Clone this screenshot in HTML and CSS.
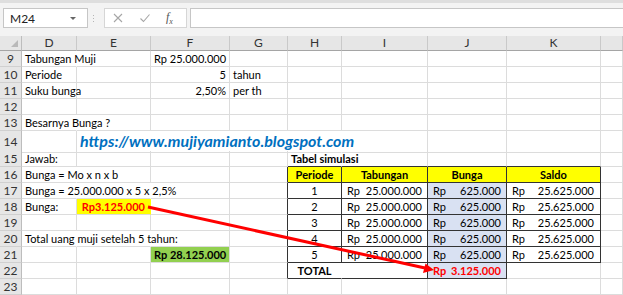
FILE: index.html
```html
<!DOCTYPE html>
<html>
<head>
<meta charset="utf-8">
<link rel="stylesheet" href="styles.css">
</head>
<body>
<div class="app">
  <div class="topbar">
    <div class="namebox"><span>M24</span><span class="caret"></span></div>
    <div class="sep"><i></i><i></i><i></i></div>
    <div class="iconbox">
      <svg class="ic" width="12" height="12" viewBox="0 0 12 12"><path d="M2 2 L10 10 M10 2 L2 10" stroke="#a6a6a6" stroke-width="1.1" fill="none"/></svg>
      <svg class="ic" width="12" height="12" viewBox="0 0 12 12"><path d="M1.5 6.5 L4.5 9.5 L10.5 2.5" stroke="#a6a6a6" stroke-width="1.1" fill="none"/></svg>
      <span class="fx">f<sub>x</sub></span>
    </div>
    <div class="finput"></div>
  </div>

  <div class="sheet">
    <div class="row hdr">
      <div class="corner"><span class="tri"></span></div>
      <div class="ch">D</div><div class="ch">E</div><div class="ch">F</div><div class="ch">G</div><div class="ch">H</div><div class="ch">I</div><div class="ch">J</div><div class="ch">K</div><div class="ch"></div>
    </div>

    <div class="row">
      <div class="rh">9</div>
      <div class="c ov">Tabungan Muji</div><div class="c"></div><div class="c r cur">Rp 25.000.000</div><div class="c"></div><div class="c"></div><div class="c"></div><div class="c"></div><div class="c"></div><div class="c"></div>
    </div>
    <div class="row">
      <div class="rh">10</div>
      <div class="c">Periode</div><div class="c"></div><div class="c r">5</div><div class="c">tahun</div><div class="c"></div><div class="c"></div><div class="c"></div><div class="c"></div><div class="c"></div>
    </div>
    <div class="row">
      <div class="rh">11</div>
      <div class="c">Suku bunga</div><div class="c"></div><div class="c r">2,50%</div><div class="c">per th</div><div class="c"></div><div class="c"></div><div class="c"></div><div class="c"></div><div class="c"></div>
    </div>
    <div class="row">
      <div class="rh">12</div>
      <div class="c"></div><div class="c"></div><div class="c"></div><div class="c"></div><div class="c"></div><div class="c"></div><div class="c"></div><div class="c"></div><div class="c"></div>
    </div>
    <div class="row">
      <div class="rh">13</div>
      <div class="c ov">Besarnya Bunga ?</div><div class="c"></div><div class="c"></div><div class="c"></div><div class="c"></div><div class="c"></div><div class="c"></div><div class="c"></div><div class="c"></div>
    </div>
    <div class="row tall">
      <div class="rh">14</div>
      <div class="c"></div><div class="c ov"><span class="url">https://www.mujiyamianto.blogspot.com</span></div><div class="c ov"></div><div class="c ov"></div><div class="c ov"></div><div class="c"></div><div class="c"></div><div class="c"></div><div class="c"></div>
    </div>
    <div class="row">
      <div class="rh">15</div>
      <div class="c">Jawab:</div><div class="c"></div><div class="c"></div><div class="c"></div><div class="c tt ov b">Tabel simulasi</div><div class="c tt"></div><div class="c tt"></div><div class="c tt"></div><div class="c"></div>
    </div>
    <div class="row">
      <div class="rh">16</div>
      <div class="c ov">Bunga = Mo x n x b</div><div class="c"></div><div class="c"></div><div class="c tl"></div><div class="c t yh">Periode</div><div class="c t yh">Tabungan</div><div class="c t yh">Bunga</div><div class="c t yh">Saldo</div><div class="c"></div>
    </div>
    <div class="row">
      <div class="rh">17</div>
      <div class="c ov">Bunga = 25.000.000 x 5 x 2,5%</div><div class="c ov"></div><div class="c"></div><div class="c tl"></div><div class="c t ctr">1</div><div class="c t acc"><span>Rp</span><span>25.000.000</span></div><div class="c t acc bl"><span>Rp</span><span>625.000</span></div><div class="c t acc k"><span>Rp</span><span>25.625.000</span></div><div class="c"></div>
    </div>
    <div class="row">
      <div class="rh">18</div>
      <div class="c">Bunga:</div><div class="c yel r red b">Rp3.125.000</div><div class="c"></div><div class="c tl"></div><div class="c t ctr">2</div><div class="c t acc"><span>Rp</span><span>25.000.000</span></div><div class="c t acc bl"><span>Rp</span><span>625.000</span></div><div class="c t acc k"><span>Rp</span><span>25.625.000</span></div><div class="c"></div>
    </div>
    <div class="row">
      <div class="rh">19</div>
      <div class="c"></div><div class="c"></div><div class="c"></div><div class="c tl"></div><div class="c t ctr">3</div><div class="c t acc"><span>Rp</span><span>25.000.000</span></div><div class="c t acc bl"><span>Rp</span><span>625.000</span></div><div class="c t acc k"><span>Rp</span><span>25.625.000</span></div><div class="c"></div>
    </div>
    <div class="row">
      <div class="rh">20</div>
      <div class="c ov">Total uang muji setelah 5 tahun:</div><div class="c ov"></div><div class="c"></div><div class="c tl"></div><div class="c t ctr">4</div><div class="c t acc"><span>Rp</span><span>25.000.000</span></div><div class="c t acc bl"><span>Rp</span><span>625.000</span></div><div class="c t acc k"><span>Rp</span><span>25.625.000</span></div><div class="c"></div>
    </div>
    <div class="row">
      <div class="rh">21</div>
      <div class="c"></div><div class="c"></div><div class="c grn r cur b">Rp 28.125.000</div><div class="c tl"></div><div class="c t ctr">5</div><div class="c t acc"><span>Rp</span><span>25.000.000</span></div><div class="c t acc bl"><span>Rp</span><span>625.000</span></div><div class="c t acc k"><span>Rp</span><span>25.625.000</span></div><div class="c"></div>
    </div>
    <div class="row">
      <div class="rh">22</div>
      <div class="c"></div><div class="c"></div><div class="c"></div><div class="c tl"></div><div class="c t ctr b nr">TOTAL</div><div class="c t"></div><div class="c t acc bl red b"><span>Rp</span><span>3.125.000</span></div><div class="c"></div><div class="c"></div>
    </div>
    <div class="row">
      <div class="rh">23</div>
      <div class="c"></div><div class="c"></div><div class="c"></div><div class="c"></div><div class="c"></div><div class="c"></div><div class="c"></div><div class="c"></div><div class="c"></div>
    </div>
  </div>

  <svg class="arrow" width="623" height="295" viewBox="0 0 623 295">
    <line x1="148" y1="207" x2="425" y2="268" stroke="#ff0000" stroke-width="3"/>
    <polygon points="434,270 425.5,263.5 423,273" fill="#ff0000"/>
  </svg>
</div>
</body>
</html>
```
FILE: styles.css
```css
* { box-sizing: border-box; }
html, body { margin: 0; padding: 0; }
body {
  width: 623px;
  height: 295px;
  overflow: hidden;
  background: #fff;
  font-family: Lato, "Liberation Sans", sans-serif;
  font-size: 11px;
  color: #000;
}
.app { position: relative; width: 623px; height: 295px; overflow: hidden; }

.topbar {
  height: 36px;
  background: #f3f3f3;
  border-top: 3px solid #dedede;
  padding-top: 5px;
  display: flex;
  align-items: flex-start;
}
.namebox {
  margin-left: 3px;
  width: 85px;
  height: 20px;
  background: #fff;
  border: 1px solid #c6c6c6;
  display: flex;
  align-items: center;
  justify-content: space-between;
  padding: 0 11px 0 6px;
  color: #222;
  font-size: 12px;
}
.caret {
  width: 0; height: 0;
  border-left: 3px solid transparent;
  border-right: 3px solid transparent;
  border-top: 3px solid #666;
}
.sep {
  width: 11px;
  margin-right: 5px;
  height: 20px;
  display: flex;
  flex-direction: column;
  align-items: center;
  justify-content: center;
  gap: 2px;
}
.sep i { width: 1px; height: 1px; background: #b5b5b5; display: block; }
.iconbox {
  width: 83px;
  height: 20px;
  background: #fff;
  border: 1px solid #d6d6d6;
  display: flex;
  align-items: center;
  padding-left: 7px;
  gap: 15px;
}
.ic { display: block; }
.fx {
  font-family: "Liberation Serif", serif;
  font-style: italic;
  font-size: 12px;
  color: #555;
}
.fx sub { font-size: 8px; }
.finput {
  flex: 1;
  height: 20px;
  margin-left: 3px;
  background: #fff;
  border: 1px solid #c6c6c6;
  border-right: none;
}

.sheet { display: flex; flex-direction: column; }
.row {
  display: grid;
  grid-template-columns: 22px 55px 74px 79px 58px 54px 86px 79px 94px 22px;
  height: 16px;
}
.row.tall { height: 20px; }
.row.hdr { height: 15px; background: #e6e6e6; }

.corner, .ch {
  border-bottom: 1px solid #a5a5a5;
  border-right: 1px solid #c9c9c9;
  color: #333;
  text-align: center;
  line-height: 14px;
  font-size: 12px;
  position: relative;
}
.corner { border-right: 1px solid #bdbdbd; }
.tri {
  position: absolute;
  right: 3px;
  bottom: 3px;
  width: 0; height: 0;
  border-left: 7px solid transparent;
  border-bottom: 7px solid #b9b9b9;
}
.rh {
  background: #e6e6e6;
  border-bottom: 1px solid #d0d0d0;
  border-right: 1px solid #bdbdbd;
  color: #333;
  text-align: center;
  line-height: 15px;
  font-size: 12px;
}
.row.tall .rh { line-height: 21px; }

.c {
  border-right: 1px solid #dcdcdc;
  border-bottom: 1px solid #dcdcdc;
  padding: 0 3px;
  line-height: 15px;
  white-space: nowrap;
  overflow: visible;
  position: relative;
}
.row.tall .c { line-height: 19px; }
.ov { border-right-color: transparent; }
.r { text-align: right; padding-right: 3px; }
.r.cur { padding-right: 6px; }
.b { font-weight: bold; }
.red { color: #ff0000; }
.ctr { text-align: center; }

.url {
  font-size: 16px;
  font-weight: bold;
  font-style: italic;
  color: #0070c0;
}

.yel { background: #ffff00; border-right-color: #ffff00; padding-right: 5px; }
.grn { background: #92d050; }

.tt { border-bottom-color: #333; }
.tl { border-right-color: #333; }
.t { border-right-color: #333; border-bottom-color: #333; }
.yh { background: #ffff00; font-weight: bold; text-align: center; }
.nr { border-right-color: transparent; }
.acc { display: flex; justify-content: space-between; padding: 0 5px 0 5px; }
.acc.k { padding: 0 6px 0 5px; }
.bl { background: #d9e1f2; }

.arrow { position: absolute; left: 0; top: 0; pointer-events: none; }
```
